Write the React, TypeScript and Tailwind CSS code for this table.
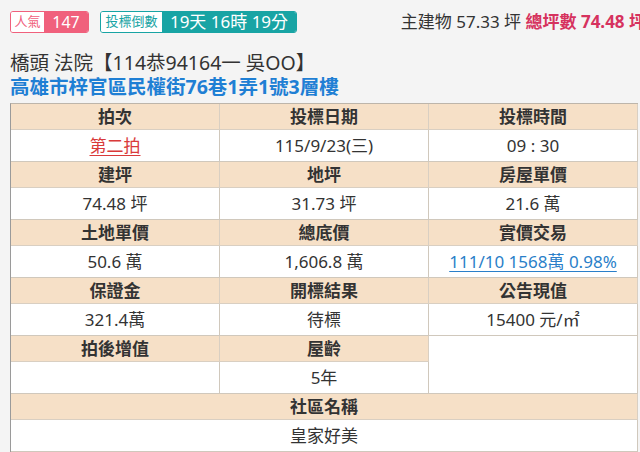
import React from "react";

const font = { fontFamily: '"Noto Sans", "Noto Sans CJK TC", sans-serif' };

function H({ children, span }: { children?: React.ReactNode; span?: boolean }) {
  return (
    <div
      className={`h-[26px] flex items-center justify-center bg-[#f6e0c7] border-r border-b border-[#d9cfc2] text-[17px] font-bold text-[#333] ${span ? "col-span-3" : ""}`}
    >
      {children}
    </div>
  );
}

function V({ children, span }: { children?: React.ReactNode; span?: boolean }) {
  return (
    <div
      className={`h-[32px] flex items-center justify-center bg-white border-r border-b border-[#d0c8bc] text-[17px] text-[#333] ${span ? "col-span-3" : ""}`}
    >
      {children}
    </div>
  );
}

export default function App() {
  return (
    <div className="w-[640px] h-[452px] overflow-hidden bg-[#f4f4f4]" style={font}>
      <div className="pt-[11px] pl-[10px]">
        <div className="flex items-center justify-between h-[22px]">
          <div className="flex items-center gap-[11px]">
            <div className="flex h-[22px] rounded-[3px] border border-[#f0607c] overflow-hidden">
              <div className="w-[33px] bg-white text-[#f0607c] text-[13px] flex items-center justify-center">人氣</div>
              <div className="w-[44px] bg-[#f0607c] text-white text-[16px] flex items-center justify-center">147</div>
            </div>
            <div className="flex h-[22px] rounded-[3px] border border-[#18a4a4] overflow-hidden">
              <div className="w-[61px] bg-white text-[#18a4a4] text-[13px] flex items-center justify-center">投標倒數</div>
              <div className="w-[134px] bg-[#18a4a4] text-white text-[17px] flex items-center justify-center">19天 16時 19分</div>
            </div>
          </div>
          <div className="whitespace-nowrap text-[17px] mr-[-6px]">
            <span className="text-[#333]">主建物 57.33 坪 </span>
            <span className="text-[#d6325e] font-bold">總坪數 74.48 坪</span>
          </div>
        </div>
        <div className="mt-[18px] h-[24px] leading-[24px] text-[19.5px] text-[#333] whitespace-nowrap">
          橋頭 法院【114恭94164一 吳OO】
        </div>
        <div className="h-[23px] leading-[23px] text-[19.5px] font-bold text-[#1f7fd4] whitespace-nowrap">
          高雄市梓官區民權街76巷1弄1號3層樓
        </div>
        <div className="mt-[5px] w-[628px] grid grid-cols-3 border-l border-t border-l-[#9a9a9a] border-t-[#bdb5aa]">
          <H>拍次</H>
          <H>投標日期</H>
          <H>投標時間</H>
          <V>
            <span className="text-[#d93a3a] underline underline-offset-[3px]">第二拍</span>
          </V>
          <V>115/9/23(三)</V>
          <V>09 : 30</V>
          <H>建坪</H>
          <H>地坪</H>
          <H>房屋單價</H>
          <V>74.48 坪</V>
          <V>31.73 坪</V>
          <V>21.6 萬</V>
          <H>土地單價</H>
          <H>總底價</H>
          <H>實價交易</H>
          <V>50.6 萬</V>
          <V>1,606.8 萬</V>
          <V>
            <span className="text-[#2a7fc9] underline underline-offset-[3px]">111/10 1568萬 0.98%</span>
          </V>
          <H>保證金</H>
          <H>開標結果</H>
          <H>公告現值</H>
          <V>321.4萬</V>
          <V>待標</V>
          <V>15400 元/㎡</V>
          <H>拍後增值</H>
          <H>屋齡</H>
          <div className="row-span-2 bg-white border-r border-b border-[#d0c8bc]" />
          <V></V>
          <V>5年</V>
          <H span>社區名稱</H>
          <V span>皇家好美</V>
        </div>
      </div>
    </div>
  );
}
